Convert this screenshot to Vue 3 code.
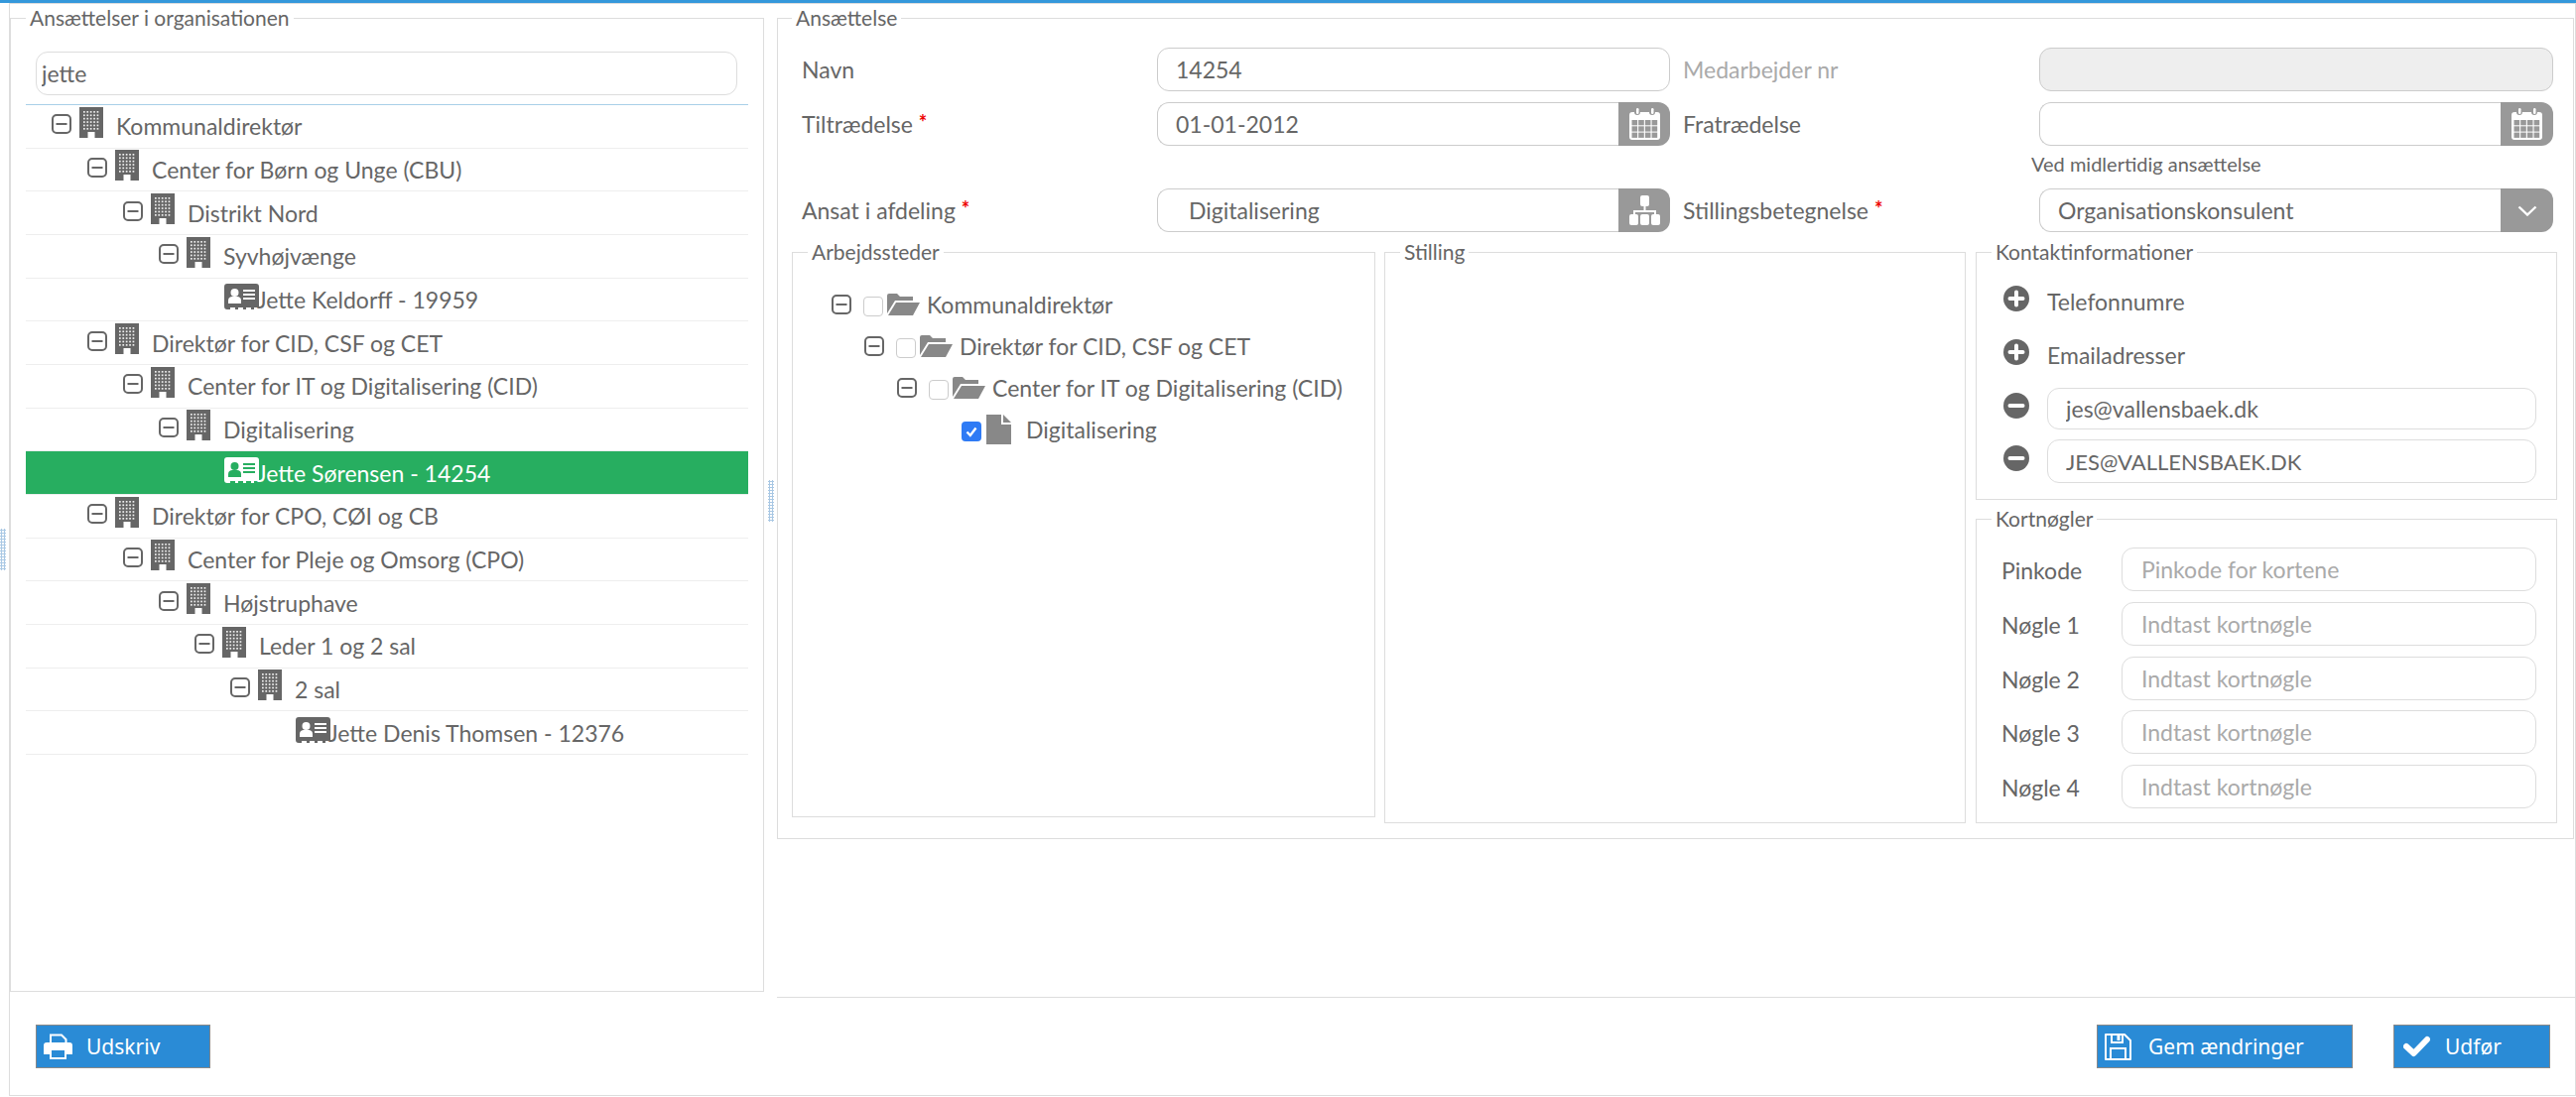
<script setup>
const orgTree = [
  { name: 'Kommunaldirektør', depth: 0 },
  { name: 'Center for Børn og Unge (CBU)', depth: 1 },
  { name: 'Distrikt Nord', depth: 2 },
  { name: 'Syvhøjvænge', depth: 3 },
  { name: 'Jette Keldorff - 19959', depth: 3, person: true },
  { name: 'Direktør for CID, CSF og CET', depth: 1 },
  { name: 'Center for IT og Digitalisering (CID)', depth: 2 },
  { name: 'Digitalisering', depth: 3 },
  { name: 'Jette Sørensen - 14254', depth: 3, person: true, selected: true },
  { name: 'Direktør for CPO, CØI og CB', depth: 1 },
  { name: 'Center for Pleje og Omsorg (CPO)', depth: 2 },
  { name: 'Højstruphave', depth: 3 },
  { name: 'Leder 1 og 2 sal', depth: 4 },
  { name: '2 sal', depth: 5 },
  { name: 'Jette Denis Thomsen - 12376', depth: 5, person: true }
];

const workplaces = [
  { name: 'Kommunaldirektør', depth: 0 },
  { name: 'Direktør for CID, CSF og CET', depth: 1 },
  { name: 'Center for IT og Digitalisering (CID)', depth: 2 },
  { name: 'Digitalisering', depth: 3, leaf: true }
];

const cardKeys = [
  { label: 'Pinkode', placeholder: 'Pinkode for kortene' },
  { label: 'Nøgle 1', placeholder: 'Indtast kortnøgle' },
  { label: 'Nøgle 2', placeholder: 'Indtast kortnøgle' },
  { label: 'Nøgle 3', placeholder: 'Indtast kortnøgle' },
  { label: 'Nøgle 4', placeholder: 'Indtast kortnøgle' }
];

// window dots on the building icon
const buildingDots = [];
for (let row = 0; row < 6; row++) {
  for (let col = 0; col < 5; col++) {
    buildingDots.push({ x: 4 + col * 3.4, y: 4 + row * 3.4 });
  }
}

// cells on the calendar icon
const calendarCells = [];
for (let row = 0; row < 3; row++) {
  for (let col = 0; col < 4; col++) {
    calendarCells.push({ x: 2.5 + col * 6.7, y: 12 + row * 6.3 });
  }
}
</script>

<template>
  <div class="shell">
    <div class="main">
      <!-- Left: organisation tree -->
      <fieldset class="box org-box">
        <legend>Ansættelser i organisationen</legend>
        <div class="org-body">
          <input class="field search" value="jette" />
          <div class="tree">
            <div
              v-for="node in orgTree"
              :key="node.name"
              class="tree-row"
              :class="{ selected: node.selected }"
              :style="{ paddingLeft: 26 + node.depth * 36 + 'px' }"
            >
              <template v-if="node.person">
                <svg class="card-icon" viewBox="0 0 36 26">
                  <path class="ink" d="M3 0H32a3 3 0 0 1 3 3V24H30V26H27V24H22V26H19V24H14V26H11V24H6V26H3a3 3 0 0 1-3-3V3A3 3 0 0 1 3 0Z" />
                  <circle class="cut" cx="10.5" cy="9" r="4" />
                  <path class="cut" d="M4 20v-3c0-3 2-4 4-4h5c2 0 4 1 4 4v3Z" />
                  <path class="cut-line" d="M19 7H31M19 11H31M19 15H31" />
                </svg>
              </template>
              <template v-else>
                <svg class="toggle" viewBox="0 0 20 20">
                  <rect x="1" y="1" width="18" height="18" rx="4" fill="none" stroke="#666" stroke-width="2" />
                  <path d="M4.5 10H15.5" stroke="#666" stroke-width="2" />
                </svg>
                <svg class="building" viewBox="0 0 24 31">
                  <rect width="24" height="31" fill="#666" />
                  <rect v-for="(d, i) in buildingDots" :key="i" :x="d.x" :y="d.y" width="1.7" height="1.7" fill="#eee" />
                  <rect x="8.5" y="25" width="7" height="6" fill="#fff" />
                </svg>
              </template>
              <span class="tree-label">{{ node.name }}</span>
            </div>
          </div>
        </div>
      </fieldset>

      <!-- Right: employment form -->
      <div class="right-col">
        <fieldset class="box job-box">
          <legend>Ansættelse</legend>
          <div class="form-grid">
            <label>Navn</label>
            <input class="field" value="14254" />
            <label class="second muted">Medarbejder nr</label>
            <input class="field disabled" disabled />

            <label>Tiltrædelse <i>*</i></label>
            <div class="group">
              <input class="field" value="01-01-2012" />
              <span class="addon narrow">
                <svg class="addon-icon" viewBox="0 0 31 32">
                  <path d="M3 4H5a3 3 0 0 0 6 0H20a3 3 0 0 0 6 0H28a3 3 0 0 1 3 3V29a3 3 0 0 1-3 3H3a3 3 0 0 1-3-3V7A3 3 0 0 1 3 4Z" fill="#fff" />
                  <rect x="7" y="0" width="2.5" height="6" rx="1.2" fill="#fff" />
                  <rect x="22" y="0" width="2.5" height="6" rx="1.2" fill="#fff" />
                  <rect v-for="(c, i) in calendarCells" :key="i" :x="c.x" :y="c.y" width="5.6" height="5.3" fill="#999" />
                </svg>
              </span>
            </div>
            <label class="second">Fratrædelse</label>
            <div class="group">
              <input class="field" />
              <span class="addon">
                <svg class="addon-icon" viewBox="0 0 31 32">
                  <path d="M3 4H5a3 3 0 0 0 6 0H20a3 3 0 0 0 6 0H28a3 3 0 0 1 3 3V29a3 3 0 0 1-3 3H3a3 3 0 0 1-3-3V7A3 3 0 0 1 3 4Z" fill="#fff" />
                  <rect x="7" y="0" width="2.5" height="6" rx="1.2" fill="#fff" />
                  <rect x="22" y="0" width="2.5" height="6" rx="1.2" fill="#fff" />
                  <rect v-for="(c, i) in calendarCells" :key="i" :x="c.x" :y="c.y" width="5.6" height="5.3" fill="#999" />
                </svg>
              </span>
            </div>

            <small class="help">Ved midlertidig ansættelse</small>

            <label>Ansat i afdeling <i>*</i></label>
            <div class="group">
              <input class="field dept" value="Digitalisering" />
              <span class="addon narrow">
                <svg class="addon-icon" viewBox="0 0 31 30">
                  <rect x="11" y="0" width="9" height="11" rx="2" fill="#fff" />
                  <path d="M15.5 10V16M5 21V16H26V21" fill="none" stroke="#fff" stroke-width="2" />
                  <rect x="0" y="19" width="9" height="11" rx="2" fill="#fff" />
                  <rect x="11" y="19" width="9" height="11" rx="2" fill="#fff" />
                  <rect x="22" y="19" width="9" height="11" rx="2" fill="#fff" />
                </svg>
              </span>
            </div>
            <label class="second">Stillingsbetegnelse <i>*</i></label>
            <div class="group">
              <input class="field" value="Organisationskonsulent" />
              <span class="addon">
                <svg class="chevron" viewBox="0 0 20 11">
                  <path d="M1.5 1.5L10 9.5L18.5 1.5" fill="none" stroke="#fff" stroke-width="2.4" />
                </svg>
              </span>
            </div>
          </div>

          <div class="sub-row">
            <fieldset class="box work-box">
              <legend>Arbejdssteder</legend>
              <div class="work-tree">
                <div
                  v-for="w in workplaces"
                  :key="w.name"
                  class="work-row"
                  :style="{ paddingLeft: 39 + w.depth * 33 + 'px' }"
                >
                  <template v-if="w.leaf">
                    <span class="check checked">
                      <svg viewBox="0 0 20 20"><path d="M5.5 10.5L8.8 14L14.5 6.5" fill="none" stroke="#fff" stroke-width="2.4" /></svg>
                    </span>
                    <svg class="doc" viewBox="0 0 25 30">
                      <path d="M0 0H15V10H25V30H0Z" fill="#888" />
                      <path d="M17 0L25 8H17Z" fill="#888" />
                    </svg>
                  </template>
                  <template v-else>
                    <svg class="toggle" viewBox="0 0 20 20">
                      <rect x="1" y="1" width="18" height="18" rx="4" fill="none" stroke="#666" stroke-width="2" />
                      <path d="M4.5 10H15.5" stroke="#666" stroke-width="2" />
                    </svg>
                    <span class="check"></span>
                    <svg class="folder" viewBox="0 0 33 22">
                      <path d="M0 20V2Q0 0 2 0H10L13 3H26V7H8L0 20Z" fill="#888" />
                      <path d="M9 9H33L26 22H1Z" fill="#888" />
                    </svg>
                  </template>
                  <span class="work-label">{{ w.name }}</span>
                </div>
              </div>
            </fieldset>

            <fieldset class="box role-box">
              <legend>Stilling</legend>
            </fieldset>

            <div class="side-col">
              <fieldset class="box contact-box">
                <legend>Kontaktinformationer</legend>
                <div class="contact-body">
                  <div class="contact-row">
                    <svg class="round-icon" viewBox="0 0 26 26">
                      <circle cx="13" cy="13" r="13" fill="#666" />
                      <path d="M13 6.5V19.5M6.5 13H19.5" stroke="#fff" stroke-width="4" stroke-linecap="round" />
                    </svg>
                    <span>Telefonnumre</span>
                  </div>
                  <div class="contact-row">
                    <svg class="round-icon" viewBox="0 0 26 26">
                      <circle cx="13" cy="13" r="13" fill="#666" />
                      <path d="M13 6.5V19.5M6.5 13H19.5" stroke="#fff" stroke-width="4" stroke-linecap="round" />
                    </svg>
                    <span>Emailadresser</span>
                  </div>
                  <div class="contact-row mail short">
                    <svg class="round-icon" viewBox="0 0 26 26">
                      <circle cx="13" cy="13" r="13" fill="#666" />
                      <path d="M6.5 13H19.5" stroke="#fff" stroke-width="4" stroke-linecap="round" />
                    </svg>
                    <input class="field light" value="jes@vallensbaek.dk" />
                  </div>
                  <div class="contact-row mail">
                    <svg class="round-icon" viewBox="0 0 26 26">
                      <circle cx="13" cy="13" r="13" fill="#666" />
                      <path d="M6.5 13H19.5" stroke="#fff" stroke-width="4" stroke-linecap="round" />
                    </svg>
                    <input class="field light caps" value="JES@VALLENSBAEK.DK" />
                  </div>
                </div>
              </fieldset>

              <fieldset class="box keys-box">
                <legend>Kortnøgler</legend>
                <div class="keys-body">
                  <template v-for="k in cardKeys" :key="k.label">
                    <label>{{ k.label }}</label>
                    <input class="field light" :placeholder="k.placeholder" />
                  </template>
                </div>
              </fieldset>
            </div>
          </div>
        </fieldset>
      </div>
    </div>

    <div class="footer">
      <button class="btn print">
        <svg class="btn-icon" viewBox="0 0 29 26">
          <path d="M7 10V1.5H18L22.5 6V10" fill="none" stroke="#fff" stroke-width="2" />
          <path d="M3 9H26a3 3 0 0 1 3 3V21H23V17H6V21H0V12A3 3 0 0 1 3 9Z" fill="#fff" />
          <path d="M7 17V25H22V17" fill="none" stroke="#fff" stroke-width="2" />
        </svg>
        <span>Udskriv</span>
      </button>
      <div class="footer-right">
        <button class="btn save">
          <svg class="btn-icon" viewBox="0 0 27 27">
            <path d="M1 1H20L26 7V26H1Z" fill="none" stroke="#fff" stroke-width="2" stroke-linejoin="round" />
            <path d="M7 1V9H18V1" fill="none" stroke="#fff" stroke-width="2" />
            <rect x="12.5" y="2" width="3" height="5" fill="#fff" />
            <path d="M6 26V15H21V26" fill="none" stroke="#fff" stroke-width="2" />
          </svg>
          <span>Gem ændringer</span>
        </button>
        <button class="btn done">
          <svg class="btn-icon" viewBox="0 0 27 22">
            <path d="M3 11L10.5 18L24 4" fill="none" stroke="#fff" stroke-width="6" stroke-linejoin="round" stroke-linecap="round" />
          </svg>
          <span>Udfør</span>
        </button>
      </div>
    </div>

    <span class="grip grip-left"></span>
    <span class="grip grip-mid"></span>
  </div>
</template>

<style>
html,
body {
  margin: 0;
  background: #fff;
}
</style>

<style scoped>
.shell {
  position: relative;
  box-sizing: border-box;
  width: 2596px;
  height: 1106px;
  border-top: 3px solid #3498db;
  padding: 3px 1px 0 10px;
  font-family: Lato, "Open Sans", sans-serif;
  font-size: 23px;
  color: #666;
  overflow: hidden;
}

.shell::before {
  content: "";
  position: absolute;
  left: 9px;
  right: 0;
  top: 0;
  bottom: 1px;
  border: 1px solid #ddd;
  pointer-events: none;
}

.main {
  display: flex;
  gap: 13px;
  height: 1000px;
}

.box {
  box-sizing: border-box;
  min-width: 0;
  margin: 0;
  padding: 0;
  border: 1px solid #ddd;
}

.box legend {
  margin-left: 15px;
  padding: 0 4px;
  font-size: 21px;
  line-height: 24px;
  color: #666;
}

.org-box {
  flex: none;
  width: 760px;
  height: 994px;
}

.org-body {
  padding: 22px 15px 0;
}

.field {
  box-sizing: border-box;
  display: block;
  width: 100%;
  height: 44px;
  min-width: 0;
  padding: 0 18px;
  border: 1px solid #ccc;
  border-radius: 12px;
  background: #fff;
  font: inherit;
  color: #666;
  outline: none;
}

.field::placeholder {
  color: #aaa;
}

.field.light {
  border-color: #ddd;
}

.field.disabled {
  background: #eee;
}

.field.caps {
  font-size: 22px;
}

.search {
  width: 707px;
  margin-left: 10px;
  padding-left: 5px;
  border-color: #ddd;
}

.tree {
  margin-top: 9px;
  border-top: 1px solid #a8cfe8;
}

.tree-row {
  box-sizing: border-box;
  display: flex;
  align-items: center;
  height: 43.67px;
  border-bottom: 1px solid #eee;
}

.tree-row.selected {
  background: #27ae60;
  color: #fff;
}

.toggle {
  flex: none;
  width: 20px;
  height: 20px;
  margin-bottom: 4px;
}

.building {
  flex: none;
  width: 24px;
  height: 31px;
  margin: 0 13px 8px 8px;
}

.card-icon {
  flex: none;
  width: 36px;
  height: 26px;
  margin: 0 -3px 6px 66px;
}

.card-icon .ink {
  fill: #666;
}

.card-icon .cut {
  fill: #fff;
}

.card-icon .cut-line {
  fill: none;
  stroke: #fff;
  stroke-width: 2;
}

.selected .card-icon .ink {
  fill: #fff;
}

.selected .card-icon .cut {
  fill: #27ae60;
}

.selected .card-icon .cut-line {
  stroke: #27ae60;
}

.right-col {
  flex: 1;
  box-sizing: border-box;
  height: 1000px;
  border-bottom: 1px solid #ddd;
}

.job-box {
  width: 1811px;
  height: 840px;
}

.job-box > legend {
  margin-left: 14px;
}

.form-grid {
  display: grid;
  grid-template-columns: 358px 517px 372px 518px;
  grid-template-rows: 44px 44px 21px 44px;
  row-gap: 11px;
  align-items: center;
  padding: 18px 0 0 24px;
}

.form-grid label.second {
  padding-left: 13px;
}

.form-grid label.muted {
  color: #aaa;
}

.form-grid label i {
  font-style: normal;
  font-weight: 700;
  color: #e00;
  vertical-align: 3px;
  font-size: 20px;
}

.help {
  grid-column: 4;
  align-self: start;
  margin-left: -8px;
  font-size: 20px;
  line-height: 14px;
  white-space: nowrap;
}

.group {
  display: flex;
}

.group .field {
  flex: 1;
  border-radius: 12px 0 0 12px;
  border-right: none;
}

.group .field.dept {
  padding-left: 31px;
}

.addon {
  flex: none;
  display: flex;
  align-items: center;
  justify-content: center;
  width: 53px;
  height: 44px;
  border-radius: 0 12px 12px 0;
  background: #999;
}

.addon.narrow {
  width: 52px;
}

.addon-icon {
  width: 31px;
  height: 32px;
}

.chevron {
  width: 20px;
  height: 11px;
}

.sub-row {
  display: flex;
  margin: 8px 0 0 14px;
}

.work-box {
  width: 588px;
  height: 582px;
  margin-right: 9px;
}

.role-box {
  width: 586px;
  height: 588px;
  margin-right: 10px;
}

.work-tree {
  padding-top: 20px;
}

.work-row {
  display: flex;
  align-items: center;
  height: 42px;
}

.work-row .toggle {
  margin: 0 12px 0 0;
}

.check {
  flex: none;
  box-sizing: border-box;
  width: 20px;
  height: 20px;
  border: 1px solid #ccc;
  border-radius: 4px;
  background: #fff;
  margin-top: 3px;
}

.check.checked {
  margin-left: 32px;
  border: none;
  background: #2f7bf5;
}

.check.checked svg {
  display: block;
}

.folder {
  flex: none;
  width: 33px;
  height: 22px;
  margin: 0 7px 0 4px;
}

.doc {
  flex: none;
  width: 25px;
  height: 30px;
  margin: 0 15px 0 5px;
}

.side-col {
  display: flex;
  flex-direction: column;
  gap: 7px;
  width: 586px;
}

.contact-box {
  height: 262px;
}

.contact-body {
  display: flex;
  flex-direction: column;
  gap: 10px;
  padding: 17px 20px 0 27px;
}

.contact-row {
  display: flex;
  align-items: center;
  gap: 18px;
  height: 44px;
}

.contact-row > span {
  margin-bottom: 2px;
}

.contact-row.short {
  height: 42px;
}

.contact-row.short .field {
  height: 42px;
}

.round-icon {
  flex: none;
  width: 26px;
  height: 26px;
  margin-bottom: 8px;
}

.contact-row.mail .round-icon {
  margin-bottom: 6px;
}

.keys-box {
  height: 319px;
}

.keys-body {
  display: grid;
  grid-template-columns: 121px 418px;
  row-gap: 10.75px;
  align-items: center;
  padding: 17px 0 0 25px;
}

.keys-body label {
  padding-top: 2px;
}

.keys-body .field {
  padding-left: 19px;
}

.footer {
  display: flex;
  justify-content: space-between;
  padding: 27px 25px 0 26px;
}

.footer-right {
  display: flex;
  gap: 41px;
}

.btn {
  display: flex;
  align-items: center;
  box-sizing: border-box;
  height: 44px;
  padding: 0;
  border: 1px solid #888;
  background: #2a8bd6;
  color: #fff;
  font-family: "Noto Sans", sans-serif;
  font-size: 21px;
}

.btn-icon {
  flex: none;
}

.print {
  width: 176px;
  padding-left: 7px;
}

.print .btn-icon {
  width: 29px;
  height: 26px;
  margin-right: 14px;
}

.save {
  width: 258px;
  padding-left: 7px;
}

.save .btn-icon {
  width: 27px;
  height: 27px;
  margin-right: 17px;
}

.done {
  width: 158px;
  padding-left: 9px;
}

.done .btn-icon {
  width: 27px;
  height: 22px;
  margin-right: 15px;
}

.grip {
  position: absolute;
  width: 6px;
  height: 42px;
  background-image: radial-gradient(#a9c8e4 1.2px, transparent 1.2px);
  background-size: 3px 3px;
}

.grip-left {
  left: 0;
  top: 530px;
}

.grip-mid {
  left: 774px;
  top: 481px;
}
</style>
